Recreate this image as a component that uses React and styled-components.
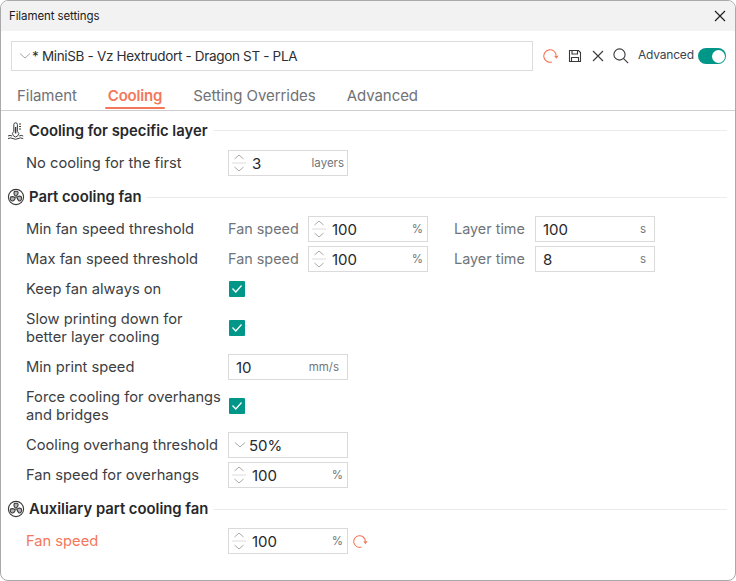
import React from 'react';
import styled, { createGlobalStyle } from 'styled-components';

const GlobalStyle = createGlobalStyle`
  html, body { margin: 0; padding: 0; background: #fff; }
  body { font-family: Inter, "Noto Sans", sans-serif; }
`;

const Window = styled.div`
  box-sizing: border-box;
  width: 736px;
  height: 581px;
  border: 1px solid #a9a9a9;
  border-radius: 8px;
  overflow: hidden;
  background: #fff;
  color: #36393d;
  font-size: 14.7px;
`;

const TitleBar = styled.div`
  height: 30px;
  background: #f2f2f2;
  display: flex;
  align-items: center;
  justify-content: space-between;
  padding: 0 8px;
  font-size: 11.5px;
  letter-spacing: -0.1px;
  color: #1a1a1a;
`;

const PresetRow = styled.div`
  display: flex;
  align-items: center;
  padding: 10px 0 0 10px;
  height: 30px;
`;

const PresetBox = styled.div`
  box-sizing: border-box;
  flex: none;
  width: 522px;
  height: 30px;
  border: 1px solid #dcdcdc;
  display: flex;
  align-items: center;
  padding-left: 6px;
  font-size: 13.5px;
  letter-spacing: -0.33px;
  color: #2b2f33;
`;

const PresetTools = styled.div`
  display: flex;
  align-items: center;
  margin-left: 10px;
  gap: 8px;
`;

const AdvancedLabel = styled.span`
  font-size: 12px;
  letter-spacing: -0.2px;
  margin: -3px 0 0 1px;
  color: #3a4450;
`;

const Toggle = styled.div`
  box-sizing: border-box;
  width: 28px;
  height: 16px;
  border-radius: 8px;
  background: #009688;
  display: flex;
  justify-content: flex-end;
  align-items: center;
  padding-right: 1px;
  margin-left: -4px;
  &::after {
    content: '';
    width: 13px;
    height: 13px;
    border-radius: 50%;
    background: #fff;
  }
`;

const Tabs = styled.div`
  display: flex;
  gap: 31px;
  height: 39px;
  padding: 0 0 0 16px;
  border-bottom: 1px solid #cfcfcf;
  align-items: flex-end;
`;

const Tab = styled.div`
  position: relative;
  font-size: 15px;
  font-weight: ${(p) => (p.$active ? 600 : 400)};
  letter-spacing: ${(p) => (p.$active ? '-0.2px' : '-0.05px')};
  color: ${(p) => (p.$active ? '#f4775a' : '#6f7276')};
  padding-bottom: 4px;
  line-height: 20px;
  ${(p) =>
    p.$active &&
    `&::after {
      content: '';
      position: absolute;
      left: -3px;
      right: -3px;
      bottom: 1px;
      height: 2px;
      border-radius: 1px;
      background: #f4775a;
    }`}
`;

const SectionHead = styled.div`
  box-sizing: border-box;
  display: flex;
  align-items: center;
  height: ${(p) => p.$h || 36}px;
  padding: 2px 8px 0 6px;
  gap: 5px;
  font-size: 14.8px;
  font-weight: 600;
  color: #26282b;
  svg { margin-right: -1px; }
  &::after {
    content: '';
    flex: 1;
    height: 1px;
    background: #ececec;
  }
`;

const Row = styled.div`
  display: flex;
  align-items: center;
  min-height: ${(p) => p.$h || 30}px;
  padding-left: 25px;
`;

const Label = styled.div`
  width: 202px;
  flex: none;
  line-height: 18px;
  white-space: nowrap;
  color: ${(p) => (p.$changed ? '#f4775a' : '#3c4043')};
`;

const SubLabel = styled.span`
  flex: none;
  width: ${(p) => p.$w}px;
  font-size: 14.4px;
  white-space: nowrap;
  color: #70757a;
  margin: 0 ${(p) => p.$mr}px 2px ${(p) => p.$ml || 0}px;
`;

const Field = styled.div`
  box-sizing: border-box;
  flex: none;
  width: 120px;
  height: 26px;
  border: 1px solid #dadada;
  display: flex;
  align-items: center;
  padding-left: ${(p) => (p.$plain ? 7 : 0)}px;
  color: #26282b;
`;

const Spin = styled.div`
  width: 16px;
  margin: 0 5px 0 2px;
  flex: none;
  svg { display: block; }
`;

const DropArrow = styled.div`
  width: 16px;
  margin-left: 4px;
  flex: none;
  svg { display: block; }
`;

const Value = styled.span`
  flex: 1;
  font-size: 15px;
`;

const Unit = styled.span`
  font-size: 11.5px;
  color: #70757a;
  margin-right: ${(p) => p.$mr}px;
`;

const CheckBox = styled.div`
  width: 16px;
  height: 16px;
  margin-left: 1px;
  background: #009688;
  border-radius: 1px;
  display: flex;
  align-items: center;
  justify-content: center;
`;

const DropValue = styled.span`
  font-size: 15px;
  color: #26282b;
`;

const ResetSlot = styled.span`
  margin-left: 5px;
  display: flex;
`;

const Chevron = () => (
  <svg width="14" height="8" viewBox="0 0 14 8" fill="none" stroke="#a8a8a8" strokeWidth="1">
    <path d="M2 1.5 L7 6 L12 1.5" />
  </svg>
);

const Spinner = () => (
  <Spin>
    <svg width="16" height="24" viewBox="0 0 16 24" fill="none" stroke="#a8a8a8" strokeWidth="1">
      <path d="M3.5 8 L8 4 L12.5 8" />
      <path d="M1 12 H15" stroke="#dcdcdc" />
      <path d="M3.5 16 L8 20 L12.5 16" />
    </svg>
  </Spin>
);

const NumField = ({ value, unit, mr = 4 }) => (
  <Field>
    <Spinner />
    <Value>{value}</Value>
    <Unit $mr={mr}>{unit}</Unit>
  </Field>
);

const PlainField = ({ value, unit, mr = 8 }) => (
  <Field $plain>
    <Value>{value}</Value>
    <Unit $mr={mr}>{unit}</Unit>
  </Field>
);

const Check = () => (
  <CheckBox>
    <svg width="12" height="10" viewBox="0 0 12 10" fill="none" stroke="#fff" strokeWidth="1.3">
      <path d="M1.5 4.5 L4.8 8 L10.5 1.5" />
    </svg>
  </CheckBox>
);

const Reset = ({ size = 16 }) => (
  <svg width={size} height={size} viewBox="0 0 16 16" fill="none" stroke="#f4775a" strokeWidth="1.1">
    <path d="M9 13.9 A6.2 6.2 0 1 1 13.2 7.6" />
    <path d="M11 7.8 H15.6 L13.3 10.8 Z" fill="#f4775a" stroke="none" />
  </svg>
);

const Save = () => (
  <svg width="16" height="16" viewBox="0 0 16 16" fill="none" stroke="#3a3a3a" strokeWidth="1.1">
    <path d="M2.5 2.5 H11.5 L13.5 4.5 V13.5 H2.5 Z" />
    <path d="M5 2.5 V6 H10.5 V2.5" />
    <path d="M4.5 13.5 V9.5 H11.5 V13.5" />
  </svg>
);

const Cross = ({ size = 14, color = '#3a3a3a' }) => (
  <svg width={size} height={size} viewBox="0 0 14 14" fill="none" stroke={color} strokeWidth="1.1">
    <path d="M2 2 L12 12 M12 2 L2 12" />
  </svg>
);

const Search = () => (
  <svg width="16" height="16" viewBox="0 0 16 16" fill="none" stroke="#3a3a3a" strokeWidth="1.1">
    <circle cx="6.5" cy="6.5" r="5.6" />
    <path d="M10.6 10.6 L15.2 15.2" />
  </svg>
);

const ThermoIcon = () => (
  <svg width="18" height="18" viewBox="0 0 18 18" fill="none" stroke="#3c3c3c" strokeWidth="1">
    <path d="M6.8 9.4 V2.6 A1.8 1.8 0 0 1 10.4 2.6 V9.4 A3 3 0 1 1 6.8 9.4 Z" />
    <path d="M8.6 5 V11.5" strokeWidth="1.5" />
    <path d="M12 2 H14 M12 4.5 H14 M12 7 H14" />
    <path d="M1 14 Q3 12.8 5 14 M12.2 14 Q14.2 12.8 16.2 14" />
    <path d="M1 16.6 Q3.5 15.2 6 16.6 T11 16.6 T16.2 16.6" />
  </svg>
);

const FanIcon = () => (
  <svg width="18" height="18" viewBox="0 0 18 18" fill="none" stroke="#3c3c3c" strokeWidth="1.1">
    <circle cx="9" cy="9" r="7.6" />
    <path d="M9 8.4 C7 7.2 6.4 5.2 7.4 3.6 C8.8 2.8 10.8 3.2 11.2 4.6 C11.4 6.2 10 7.4 9 8.4 Z" fill="#b4b4b4" />
    <path d="M9.8 9.4 C11 8 13 7.8 14.4 9 C15 10.6 14.4 12.6 13 13 C11.4 13.2 10.4 10.8 9.8 9.4 Z" fill="#b4b4b4" />
    <path d="M8.2 9.4 C8.2 11 7 13.4 5 13 C3.4 12.4 2.8 10.4 3.6 9 C5 8.2 6.8 8.8 8.2 9.4 Z" fill="#b4b4b4" />
  </svg>
);

export default function App() {
  return (
    <Window>
      <GlobalStyle />
      <TitleBar>
        Filament settings
        <Cross size={14} color="#1a1a1a" />
      </TitleBar>
      <PresetRow>
        <PresetBox>
          <Chevron />
          * MiniSB - Vz Hextrudort - Dragon ST - PLA
        </PresetBox>
        <PresetTools>
          <Reset />
          <Save />
          <Cross />
          <Search />
          <AdvancedLabel>Advanced</AdvancedLabel>
          <Toggle />
        </PresetTools>
      </PresetRow>
      <Tabs>
        <Tab>Filament</Tab>
        <Tab $active>Cooling</Tab>
        <Tab>Setting Overrides</Tab>
        <Tab>Advanced</Tab>
      </Tabs>

      <SectionHead $h={37}><ThermoIcon />Cooling for specific layer</SectionHead>
      <Row>
        <Label>No cooling for the first</Label>
        <NumField value="3" unit="layers" mr={3} />
      </Row>

      <SectionHead><FanIcon />Part cooling fan</SectionHead>
      <Row>
        <Label>Min fan speed threshold</Label>
        <SubLabel $w={70} $mr={10}>Fan speed</SubLabel>
        <NumField value="100" unit="%" />
        <SubLabel $w={73} $ml={26} $mr={8}>Layer time</SubLabel>
        <PlainField value="100" unit="s" />
      </Row>
      <Row>
        <Label>Max fan speed threshold</Label>
        <SubLabel $w={70} $mr={10}>Fan speed</SubLabel>
        <NumField value="100" unit="%" />
        <SubLabel $w={73} $ml={26} $mr={8}>Layer time</SubLabel>
        <PlainField value="8" unit="s" />
      </Row>
      <Row>
        <Label>Keep fan always on</Label>
        <Check />
      </Row>
      <Row $h={48}>
        <Label>Slow printing down for<br />better layer cooling</Label>
        <Check />
      </Row>
      <Row>
        <Label>Min print speed</Label>
        <PlainField value="10" unit="mm/s" />
      </Row>
      <Row $h={48}>
        <Label>Force cooling for overhangs<br />and bridges</Label>
        <Check />
      </Row>
      <Row>
        <Label>Cooling overhang threshold</Label>
        <Field>
          <DropArrow><Chevron /></DropArrow>
          <DropValue>50%</DropValue>
        </Field>
      </Row>
      <Row>
        <Label>Fan speed for overhangs</Label>
        <NumField value="100" unit="%" />
      </Row>

      <SectionHead><FanIcon />Auxiliary part cooling fan</SectionHead>
      <Row>
        <Label $changed>Fan speed</Label>
        <NumField value="100" unit="%" />
        <ResetSlot><Reset size={15} /></ResetSlot>
      </Row>
    </Window>
  );
}
